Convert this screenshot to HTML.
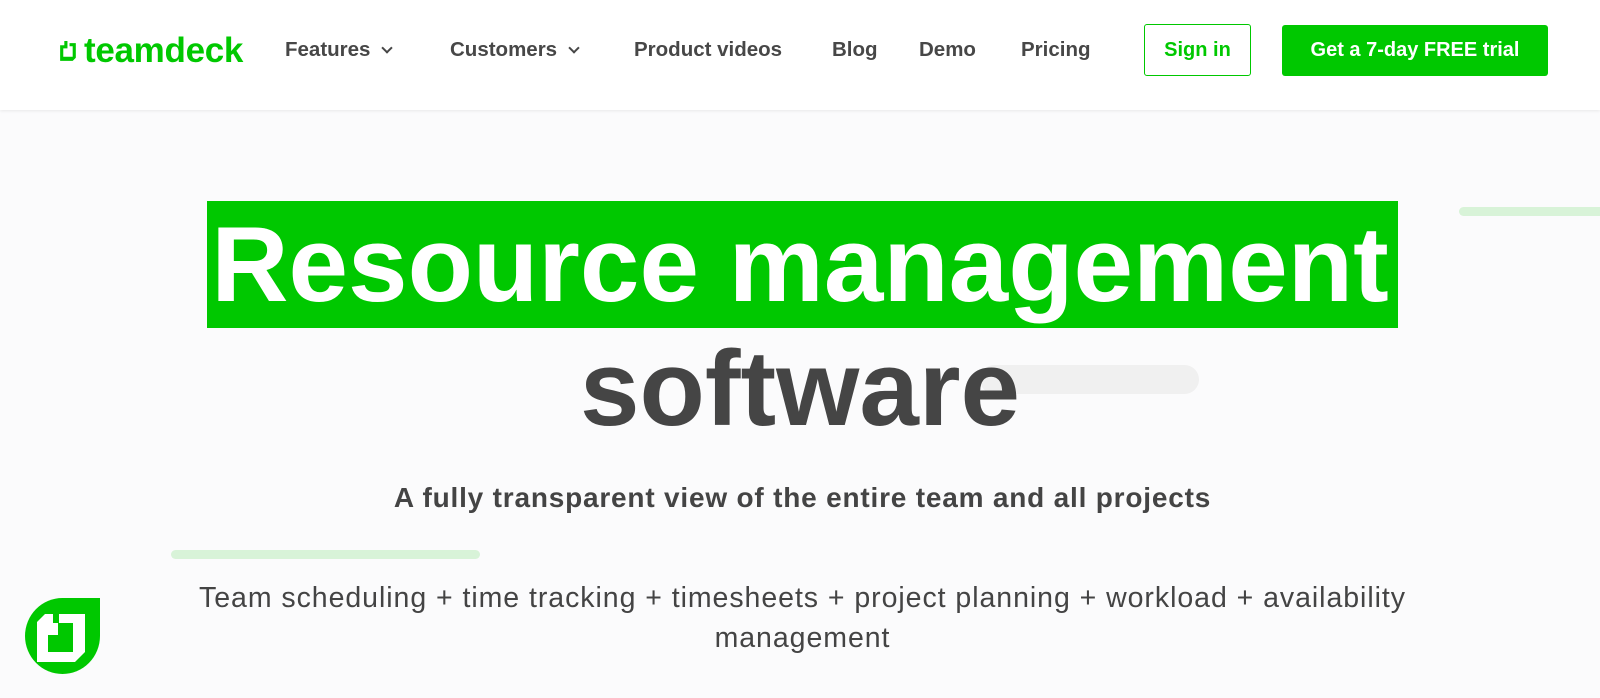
<!DOCTYPE html>
<html><head><meta charset="utf-8"><style>
*{margin:0;padding:0;box-sizing:border-box}
body{width:1600px;height:698px;background:#fbfbfc;font-family:"Liberation Sans",sans-serif;position:relative;overflow:hidden;color:#454545}
.hdr{position:absolute;left:0;top:0;width:1600px;height:110px;background:#fff;box-shadow:0 1px 3px rgba(0,0,0,.08)}
.logo{position:absolute;left:57px;top:31px;display:flex;align-items:center;color:#00c800;font-weight:bold;font-size:35px;letter-spacing:-0.3px}
.nav{position:absolute;top:38px;font-size:20.5px;font-weight:bold;color:#474747}
.chev{display:inline-block;width:8px;height:8px;border-right:2.5px solid #474747;border-bottom:2.5px solid #474747;transform:rotate(45deg);margin-left:13px;position:relative;top:-4px}
.signin{position:absolute;left:1144px;top:24px;width:107px;height:52px;border:1px solid #00c800;border-radius:3px;color:#00c800;font-weight:bold;font-size:20px;text-align:center;line-height:50px}
.trial{position:absolute;left:1282px;top:25px;width:266px;height:51px;background:#00c800;border-radius:3px;color:#fff;font-weight:bold;font-size:20px;text-align:center;line-height:51px}
.bar{position:absolute;border-radius:6px}
.hl{position:absolute;left:207px;top:201px;width:1191px;height:127px;background:#00c800}
.h1{position:absolute;left:0;width:1600px;text-align:center;font-weight:bold;font-size:107px;letter-spacing:0px}
.sub{position:absolute;left:0;width:1605px;text-align:center;top:482px;font-size:28px;font-weight:bold;color:#444;letter-spacing:0.8px}
.desc{position:absolute;left:120px;width:1365px;text-align:center;top:578px;font-size:28.5px;line-height:40px;color:#444;letter-spacing:0.95px}
.icon{position:absolute;left:25px;top:598px;width:75px;height:76px;background:#00c800;border-radius:50% 0 50% 50%}
</style></head><body>
<div class="hdr">
<div class="logo"><svg width="23" height="23" viewBox="0 0 22 22" style="margin-right:4px"><path d="M3 5h4V1h3v7H6v8h9V6h-3V3h6v14l-3 3H3z" fill="#00c800"/></svg>teamdeck</div>
<div class="nav" style="left:285px">Features<span class="chev"></span></div>
<div class="nav" style="left:450px">Customers<span class="chev"></span></div>
<div class="nav" style="left:634px">Product videos</div>
<div class="nav" style="left:832px">Blog</div>
<div class="nav" style="left:919px">Demo</div>
<div class="nav" style="left:1021px">Pricing</div>
<div class="signin">Sign in</div>
<div class="trial">Get a 7-day FREE trial</div>
</div>
<div class="bar" style="left:1459px;top:207px;width:160px;height:9px;background:#d8f3d8"></div>
<div class="bar" style="left:171px;top:550px;width:309px;height:9px;background:#d8f3d8"></div>
<div class="bar" style="left:980px;top:365px;width:219px;height:29px;background:#f0f0f0;border-radius:15px"></div>
<div class="hl"></div>
<div class="h1" style="top:202px;color:#fff">Resource management</div>
<div class="h1" style="top:326px;color:#454545">software</div>
<div class="sub">A fully transparent view of the entire team and all projects</div>
<div class="desc">Team scheduling + time tracking + timesheets + project planning + workload + availability management</div>
<div class="icon"><svg width="75" height="76" viewBox="0 0 75 76"><path d="M12 24L20 16H28V25H33V37H23V54H48V25H34V16H60V54L50 64H12Z" fill="#fff"/></svg></div>
</body></html>
